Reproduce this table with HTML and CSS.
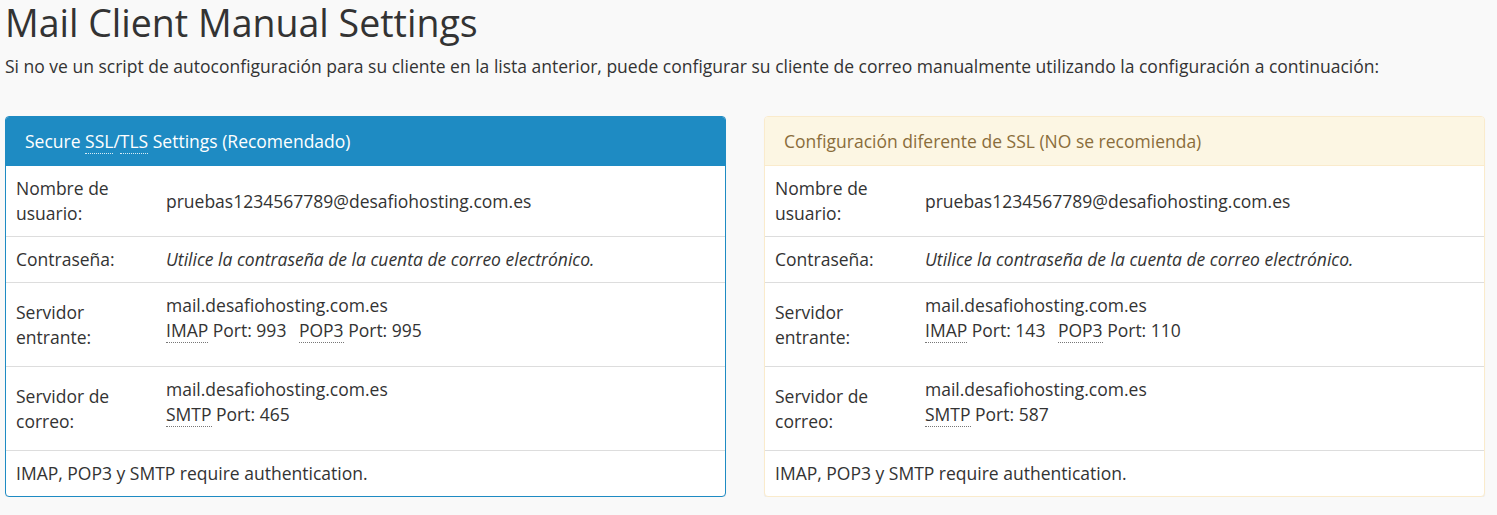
FILE: index.html
```html
<!DOCTYPE html>
<html lang="es">
<head>
<meta charset="utf-8">
<title>Mail Client Manual Settings</title>
<link rel="stylesheet" href="styles.css">
</head>
<body>
<div class="page">
  <h1 class="title">Mail Client Manual Settings</h1>
  <p class="intro">Si no ve un script de autoconfiguración para su cliente en la lista anterior, puede configurar su cliente de correo manualmente utilizando la configuración a continuación:</p>

  <div class="panels">
    <div class="panel panel-primary">
      <div class="panel-heading">Secure <abbr title="Secure Sockets Layer">SSL</abbr>/<abbr title="Transport Layer Security">TLS</abbr> Settings (Recomendado)</div>
      <table class="settings">
        <tr>
          <td class="label">Nombre de usuario:</td>
          <td class="value">pruebas1234567789@desafiohosting.com.es</td>
        </tr>
        <tr>
          <td class="label">Contraseña:</td>
          <td class="value"><em>Utilice la contraseña de la cuenta de correo electrónico.</em></td>
        </tr>
        <tr>
          <td class="label">Servidor entrante:</td>
          <td class="value">
            <div class="server">mail.desafiohosting.com.es<br>
              <abbr title="Internet Message Access Protocol">IMAP</abbr> Port: 993 <span class="port2"><abbr title="Post Office Protocol 3">POP3</abbr> Port: 995</span>
            </div>
          </td>
        </tr>
        <tr>
          <td class="label">Servidor de correo:</td>
          <td class="value">
            <div class="server">mail.desafiohosting.com.es<br>
              <abbr title="Simple Mail Transfer Protocol">SMTP</abbr> Port: 465
            </div>
          </td>
        </tr>
        <tr>
          <td class="note" colspan="2">IMAP, POP3 y SMTP require authentication.</td>
        </tr>
      </table>
    </div>

    <div class="panel panel-warning">
      <div class="panel-heading">Configuración diferente de SSL (NO se recomienda)</div>
      <table class="settings">
        <tr>
          <td class="label">Nombre de usuario:</td>
          <td class="value">pruebas1234567789@desafiohosting.com.es</td>
        </tr>
        <tr>
          <td class="label">Contraseña:</td>
          <td class="value"><em>Utilice la contraseña de la cuenta de correo electrónico.</em></td>
        </tr>
        <tr>
          <td class="label">Servidor entrante:</td>
          <td class="value">
            <div class="server">mail.desafiohosting.com.es<br>
              <abbr title="Internet Message Access Protocol">IMAP</abbr> Port: 143 <span class="port2"><abbr title="Post Office Protocol 3">POP3</abbr> Port: 110</span>
            </div>
          </td>
        </tr>
        <tr>
          <td class="label">Servidor de correo:</td>
          <td class="value">
            <div class="server">mail.desafiohosting.com.es<br>
              <abbr title="Simple Mail Transfer Protocol">SMTP</abbr> Port: 587
            </div>
          </td>
        </tr>
        <tr>
          <td class="note" colspan="2">IMAP, POP3 y SMTP require authentication.</td>
        </tr>
      </table>
    </div>
  </div>
</div>
</body>
</html>
```

FILE: styles.css
```css
html, body {
  margin: 0;
  padding: 0;
  background: #f9f9f9;
}

body {
  font-family: "Open Sans", "Liberation Sans", sans-serif;
  font-size: 17.5px;
  line-height: 25px;
  color: #333;
}

.page {
  padding: 0 12px 0 5px;
}

.title {
  margin: 0;
  font-size: 37.5px;
  font-weight: 400;
  line-height: 46px;
  color: #333;
}

.intro {
  margin: 8px 0 0;
}

.panels {
  display: grid;
  grid-template-columns: 1fr 1fr;
  column-gap: 38px;
  margin-top: 37px;
}

.panel {
  background: #fff;
  border: 1px solid transparent;
  border-radius: 4px;
  box-shadow: 0 1px 1px rgba(0, 0, 0, 0.05);
  overflow: hidden;
}

.panel-heading {
  padding: 12px 19px 11px;
  border-bottom: 1px solid transparent;
}

.panel-primary {
  border-color: #1e8bc3;
}

.panel-primary .panel-heading {
  background: #1e8bc3;
  border-bottom-color: #1e8bc3;
  color: #fff;
}

.panel-warning {
  border-color: #faebcc;
}

.panel-warning .panel-heading {
  background: #fcf6e3;
  border-bottom-color: #faebcc;
  color: #8a6d3b;
}

abbr[title] {
  text-decoration: none;
  border-bottom: 1px dotted #777;
  cursor: help;
}

.panel-primary .panel-heading abbr[title] {
  border-bottom-color: #d8ecf6;
}

.settings {
  width: 100%;
  border-collapse: collapse;
}

.settings td {
  padding: 10px;
  vertical-align: middle;
  border-top: 1px solid #ddd;
}

.settings tr:first-child td {
  border-top: 0;
}

.settings .label {
  width: 140px;
}

.settings .value {
  padding-left: 0;
}

.server {
  padding-bottom: 13px;
}

.port2 {
  margin-left: 8px;
}
```
